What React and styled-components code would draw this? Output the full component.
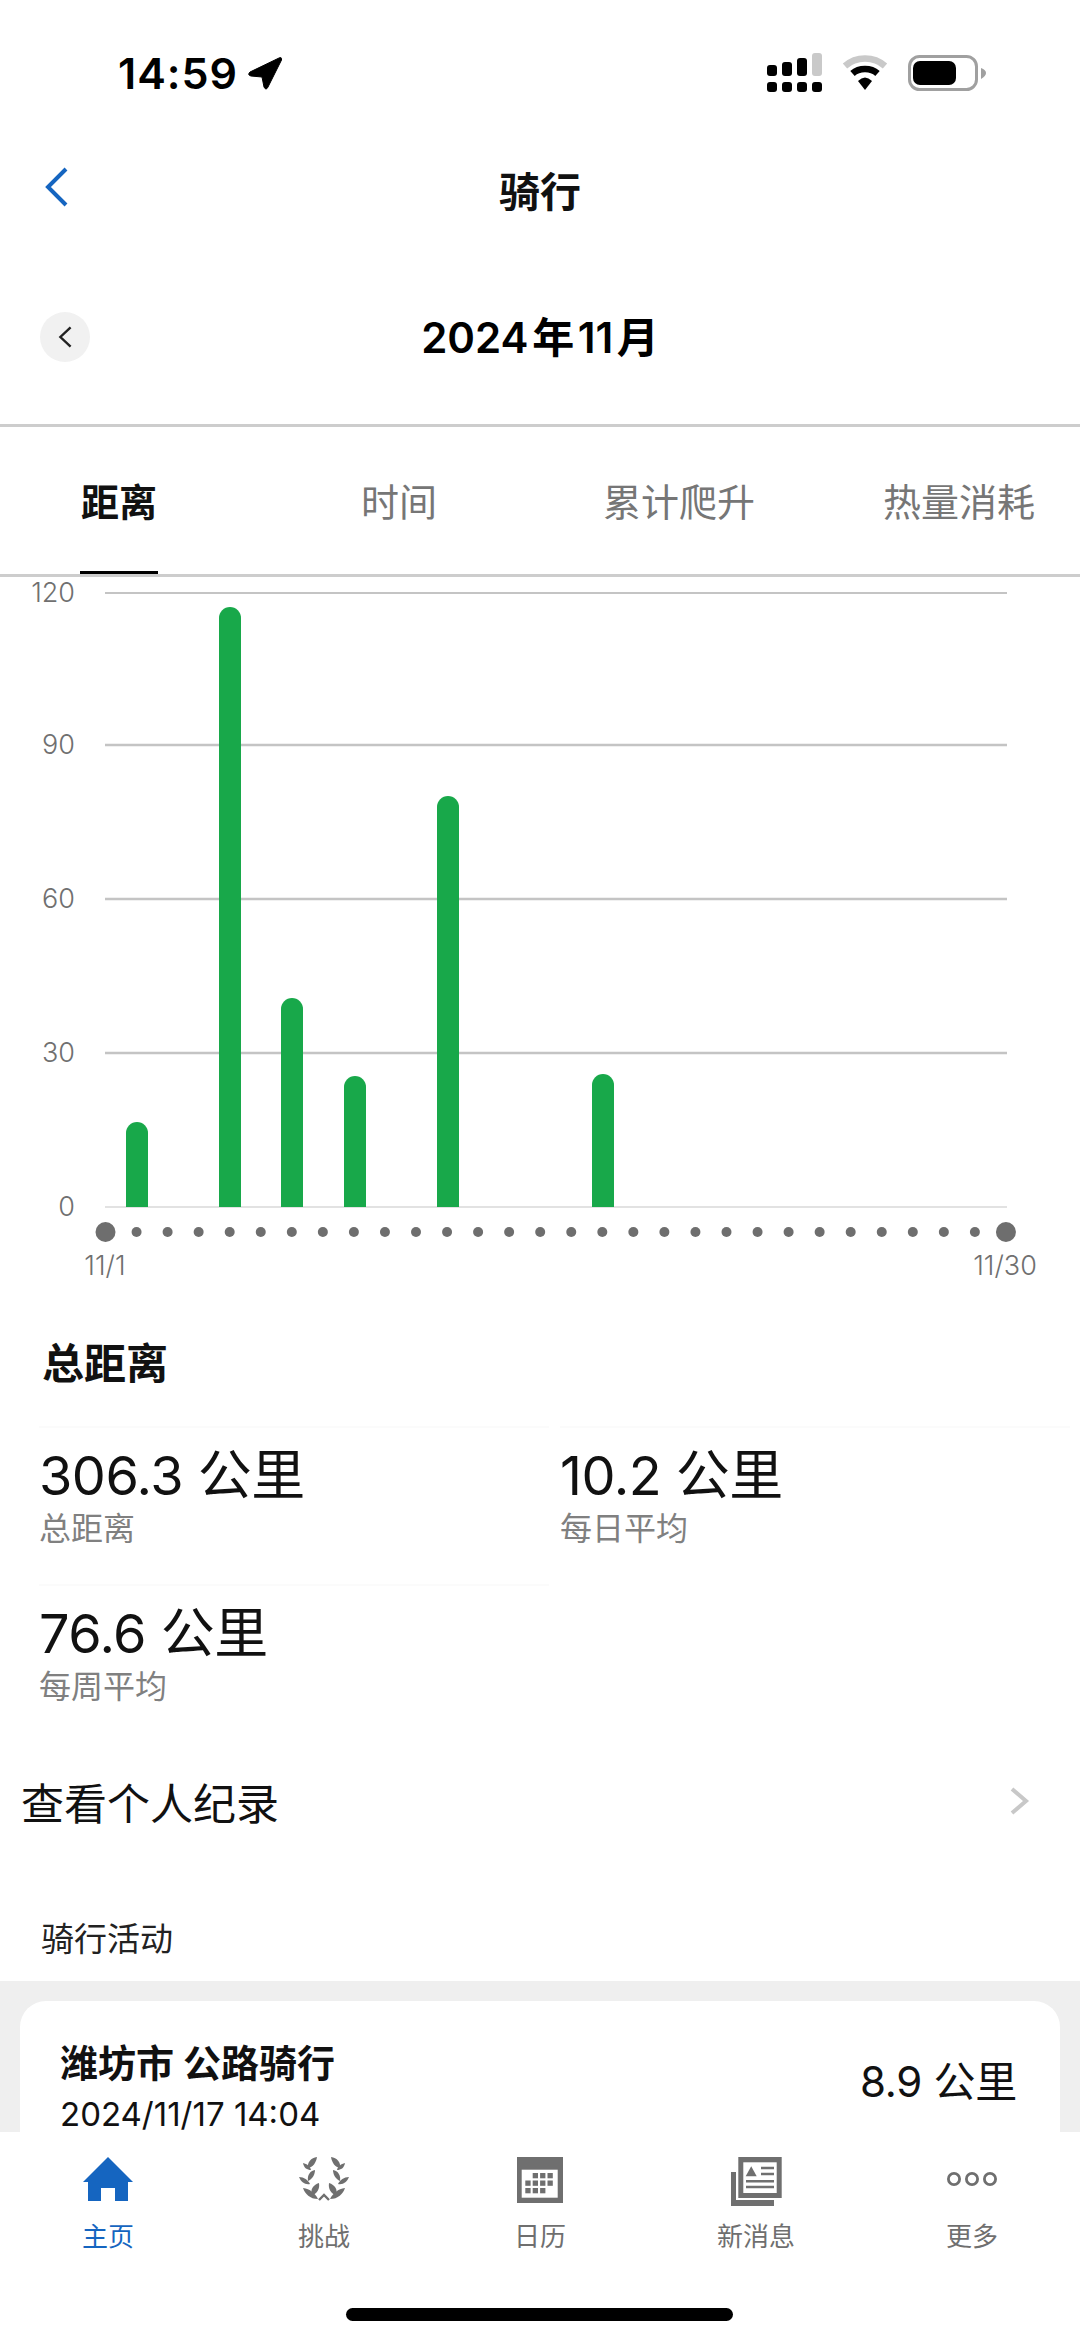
import React from "react";
import styled, { createGlobalStyle } from "styled-components";

const GlobalStyle = createGlobalStyle`
  html, body {
    margin: 0;
    padding: 0;
    background: #fff;
  }
  * {
    box-sizing: border-box;
  }
`;

const FONT = `Inter, "Noto Sans CJK SC", sans-serif`;

const Page = styled.div`
  width: 1080px;
  height: 2341px;
  display: flex;
  flex-direction: column;
  overflow: hidden;
  font-family: ${FONT};
  color: #111;
  background: #fff;
`;
const Scroll = styled.div`
  flex: 1;
  min-height: 0;
  overflow: hidden;
`;

const StatusBar = styled.div`
  height: 133px;
  padding: 13px 94px 0 118px;
  display: flex;
  align-items: center;
  justify-content: space-between;
`;
const TimeWrap = styled.div`
  display: flex;
  align-items: center;
  gap: 9px;
`;
const Time = styled.span`
  font-size: 43px;
  font-weight: 600;
  letter-spacing: 1px;
  color: #000;
`;
const StatusIcons = styled.div`
  display: flex;
  align-items: center;
  gap: 20px;
`;

const NavBar = styled.div`
  height: 114px;
  padding-bottom: 2px;
  position: relative;
  display: flex;
  align-items: center;
  justify-content: center;
`;
const NavTitle = styled.h1`
  margin: 0;
  font-size: 41px;
  font-weight: 700;
  color: #111;
`;
const BackButton = styled.div`
  position: absolute;
  left: 44px;
  top: 32px;
  display: flex;
`;

const MonthRow = styled.div`
  height: 180px;
  padding-bottom: 2px;
  position: relative;
  display: flex;
  align-items: center;
  justify-content: center;
  border-bottom: 3px solid #cdcdcd;
`;
const MonthTitle = styled.h2`
  margin: 0;
  font-size: 42px;
  font-weight: 600;
  word-spacing: -7px;
  color: #000;
`;
const PrevMonth = styled.div`
  position: absolute;
  left: 40px;
  top: 65px;
  width: 50px;
  height: 50px;
  border-radius: 50%;
  background: #f1f1f1;
  display: flex;
  align-items: center;
  justify-content: center;
`;

const Tabs = styled.div`
  height: 150px;
  margin-left: -21px;
  display: flex;
`;
const TabBox = styled.div`
  width: 280px;
  flex: none;
  height: 147px;
  display: flex;
  align-items: flex-start;
  justify-content: center;
`;
const TabText = styled.div`
  height: 147px;
  padding: 0 1px;
  display: flex;
  align-items: center;
  font-size: 38px;
  font-weight: ${(p) => (p.$active ? 700 : 400)};
  color: ${(p) => (p.$active ? "#111" : "#767676")};
  border-bottom: 3px solid ${(p) => (p.$active ? "#000" : "transparent")};
`;
const TabsLine = styled.div`
  height: 3px;
  background: #cdcdcd;
  margin-top: -3px;
`;

const ChartSvg = styled.svg`
  display: block;
  width: 1080px;
  height: 723px;
  text {
    font-family: ${FONT};
    font-size: 27px;
    font-weight: 300;
    fill: #707070;
  }
`;

const SectionTitle = styled.h3`
  margin: 0;
  height: 126px;
  padding: 0 0 6px 42px;
  display: flex;
  align-items: center;
  font-size: 42px;
  font-weight: 700;
  color: #111;
`;

const StatGrid = styled.div`
  display: grid;
  grid-template-columns: 510px 510px;
  column-gap: 11px;
  padding-left: 39px;
`;
const Stat = styled.div`
  height: 158px;
  padding-top: 12px;
  border-top: 2px solid #fbfbfb;
`;
const StatValue = styled.div`
  font-size: 54px;
  line-height: 72px;
  letter-spacing: -0.5px;
  font-weight: 400;
  color: #111;
`;
const StatLabel = styled.div`
  font-size: 32px;
  line-height: 44px;
  margin-top: -5px;
  color: #808080;
`;

const RecordRow = styled.div`
  height: 120px;
  padding: 0 50px 2px 21px;
  display: flex;
  align-items: center;
  justify-content: space-between;
  font-size: 43px;
  color: #111;
`;

const ActivityTitle = styled.div`
  height: 119px;
  padding: 30px 0 0 41px;
  display: flex;
  align-items: center;
  font-size: 33px;
  color: #222;
`;

const ActivityPanel = styled.div`
  background: #efefef;
  padding: 20px 20px 0;
`;
const ActivityCard = styled.div`
  height: 200px;
  background: #fff;
  border-radius: 26px 26px 0 0;
  padding: 36px 43px 0 40px;
  display: flex;
  justify-content: space-between;
`;
const CardName = styled.div`
  font-size: 38px;
  line-height: 52px;
  font-weight: 700;
  color: #111;
`;
const CardDate = styled.div`
  font-size: 33px;
  line-height: 44px;
  margin-top: 3px;
  color: #111;
`;
const CardDistance = styled.div`
  font-size: 42px;
  line-height: 60px;
  margin-top: 15px;
  letter-spacing: -0.3px;
  color: #111;
`;

const BottomBar = styled.div`
  height: 209px;
  flex: none;
  position: relative;
  background: #fff;
  display: grid;
  grid-template-columns: repeat(5, 216px);
`;
const BottomItem = styled.div`
  display: flex;
  flex-direction: column;
  align-items: center;
  padding-top: 25px;
  font-size: 26px;
  color: ${(p) => (p.$active ? "#1565c0" : "#6f6f6f")};
`;
const BottomIcon = styled.div`
  height: 56px;
  display: flex;
  align-items: flex-start;
  justify-content: center;
`;
const BottomLabel = styled.div`
  line-height: 34px;
  margin-top: 7px;
`;
const HomeIndicator = styled.div`
  position: absolute;
  left: 346px;
  bottom: 20px;
  width: 387px;
  height: 13px;
  border-radius: 7px;
  background: #000;
`;

const LocationArrow = () => (
  <svg width="36" height="35" viewBox="0 0 36 35">
    <path d="M32 2 L3 16 Q0 19 4 20 L15 21 L17 31 Q19 35 21 31 L34.5 4 Q35 0.5 32 2 Z" fill="#000" stroke="#000" strokeWidth="1" strokeLinejoin="round" />
  </svg>
);

const SignalIcon = () => {
  const cols = [
    { x: 0, top: 12, gray: false },
    { x: 15, top: 9, gray: false },
    { x: 30, top: 5, gray: false },
    { x: 45, top: 0, gray: true },
  ];
  return (
    <svg width="55" height="40" viewBox="0 0 55 40">
      {cols.map((c) => (
        <g key={c.x}>
          <rect x={c.x} y={c.top} width="10" height={23 - c.top} rx="3" fill={c.gray ? "#c9c9c9" : "#000"} />
          <rect x={c.x} y="29" width="10" height="10" rx="3" fill="#000" />
        </g>
      ))}
    </svg>
  );
};

const WifiIcon = () => (
  <svg width="46" height="36" viewBox="0 0 46 36">
    <path d="M3 11 C14 1 32 1 43 11" fill="none" stroke="#c9c9c9" strokeWidth="6.5" />
    <path d="M10.5 18.5 C17 12.5 29 12.5 35.5 18.5" fill="none" stroke="#000" strokeWidth="6.5" />
    <path d="M16 26 Q23 19 30 26 L23 35 Z" fill="#000" />
  </svg>
);

const BatteryIcon = () => (
  <svg width="78" height="36" viewBox="0 0 78 36">
    <rect x="1.5" y="1.5" width="67" height="33" rx="10" fill="none" stroke="#a0a0a0" strokeWidth="3" />
    <rect x="5" y="6" width="43" height="24" rx="7" fill="#000" />
    <path d="M73 13 Q78 15 78 18 Q78 21 73 24 Z" fill="#a0a0a0" />
  </svg>
);

const Chevron = ({ w, h, color, sw, left }) => (
  <svg width={w} height={h} viewBox={`0 0 ${w} ${h}`}>
    {left ? (
      <path d={`M${w - sw} ${sw} L${sw} ${h / 2} L${w - sw} ${h - sw}`} fill="none" stroke={color} strokeWidth={sw} />
    ) : (
      <path d={`M${sw} ${sw} L${w - sw} ${h / 2} L${sw} ${h - sw}`} fill="none" stroke={color} strokeWidth={sw} />
    )}
  </svg>
);

const HomeGlyph = () => (
  <svg width="50" height="44" viewBox="0 0 50 44">
    <path d="M25 0 L50 25 L45 25 L45 44 L32 44 L32 31 L18 31 L18 44 L5 44 L5 25 L0 25 Z" fill="#1565c0" />
  </svg>
);

// one side of the wreath, mirrored for the other side
const leaves = [
  "M18 0 C12 1 8 5 9 11 C14 10 17 6 18 0 Z",
  "M4 6 C5 11 8 13 12 13 C11 9 8 7 4 6 Z",
  "M16 13 C11 14 8 18 9 24 C13 22 16 18 16 13 Z",
  "M0 20 C2 25 6 28 11 27 C9 23 5 20 0 20 Z",
  "M20 26 C14 28 11 32 13 39 C18 36 21 32 20 26 Z",
  "M4 31 C6 37 11 42 19 42 C16 36 11 32 4 31 Z",
];

const WreathGlyph = () => (
  <svg width="50" height="44" viewBox="0 0 50 44">
    <g fill="#6f6f6f">
      {leaves.map((d) => (
        <path key={d} d={d} />
      ))}
      <g transform="translate(50 0) scale(-1 1)">
        {leaves.map((d) => (
          <path key={d} d={d} />
        ))}
      </g>
    </g>
    <path d="M20 43 L25 38 L30 43" fill="none" stroke="#6f6f6f" strokeWidth="2.4" />
  </svg>
);

const CalendarGlyph = () => {
  const cells = [];
  [0, 1, 2].forEach((r) =>
    [0, 1, 2, 3].forEach((c) => {
      if (r === 0 && c === 0) return;
      if (r === 2 && c === 3) return;
      cells.push(<rect key={`${r}-${c}`} x={8.3 + c * 7.4} y={16 + r * 7.5} width="5.3" height="5.3" fill="#6f6f6f" />);
    })
  );
  return (
    <svg width="46" height="46" viewBox="0 0 46 46">
      <rect width="46" height="46" fill="#6f6f6f" />
      <rect x="4.7" y="12.7" width="36" height="28" fill="#fff" />
      {cells}
    </svg>
  );
};

const NewsGlyph = () => (
  <svg width="51" height="50" viewBox="0 0 51 50">
    <path d="M0 15 H5 V43 H43 V49 H0 Z" fill="#6f6f6f" />
    <rect x="7.3" y="0" width="43.4" height="41" fill="#6f6f6f" />
    <rect x="12.3" y="5.3" width="33.4" height="30.7" fill="#fff" />
    <path d="M20.2 9.3 L25.7 19.3 L14.7 19.3 Z" fill="#6f6f6f" />
    <path d="M30 11 H43 M30 17 H43 M15 24.3 H43 M15 30 H43" stroke="#6f6f6f" strokeWidth="2.4" />
  </svg>
);

const MoreGlyph = () => (
  <svg width="50" height="46" viewBox="0 0 50 46">
    {[7, 25, 43].map((cx) => (
      <circle key={cx} cx={cx} cy="22" r="5.6" fill="none" stroke="#6f6f6f" strokeWidth="2.8" />
    ))}
  </svg>
);

const chartTop = 577;
const gridLines = [
  { label: "120", y: 593, w: 2 },
  { label: "90", y: 745, w: 2.6 },
  { label: "60", y: 899, w: 2.6 },
  { label: "30", y: 1053, w: 2.6 },
  { label: "0", y: 1207, w: 2 },
];
const bars = [
  { x: 126, top: 1122 },
  { x: 219, top: 607 },
  { x: 281, top: 998 },
  { x: 344, top: 1076 },
  { x: 437, top: 796 },
  { x: 592, top: 1074 },
];

const Chart = () => (
  <ChartSvg viewBox={`0 ${chartTop} 1080 723`}>
    {gridLines.map((g) => (
      <g key={g.label}>
        <line x1="105" x2="1007" y1={g.y} y2={g.y} stroke={g.label === "0" ? "#e2e2e2" : "#c4c4c4"} strokeWidth={g.w} />
        <text x="75" y={g.y + 9} textAnchor="end">
          {g.label}
        </text>
      </g>
    ))}
    {bars.map((b) => (
      <path
        key={b.x}
        d={`M${b.x} 1207 V${b.top + 11} A11 11 0 0 1 ${b.x + 22} ${b.top + 11} V1207 Z`}
        fill="#18a84a"
      />
    ))}
    {Array.from({ length: 30 }).map((_, i) => (
      <circle key={i} cx={105.5 + i * 31.05} cy="1232" r={i === 0 || i === 29 ? 10 : 5} fill="#6e6e6e" />
    ))}
    <text x="105" y="1275" textAnchor="middle">
      11/1
    </text>
    <text x="1005" y="1275" textAnchor="middle">
      11/30
    </text>
  </ChartSvg>
);

const stats = [
  { value: "306.3 公里", label: "总距离" },
  { value: "10.2 公里", label: "每日平均" },
  { value: "76.6 公里", label: "每周平均" },
];

const bottomItems = [
  { label: "主页", icon: <HomeGlyph />, active: true },
  { label: "挑战", icon: <WreathGlyph /> },
  { label: "日历", icon: <CalendarGlyph /> },
  { label: "新消息", icon: <NewsGlyph /> },
  { label: "更多", icon: <MoreGlyph /> },
];

export default function App() {
  return (
    <Page>
      <GlobalStyle />
      <Scroll>
        <StatusBar>
          <TimeWrap>
            <Time>14:59</Time>
            <LocationArrow />
          </TimeWrap>
          <StatusIcons>
            <SignalIcon />
            <WifiIcon />
            <BatteryIcon />
          </StatusIcons>
        </StatusBar>
        <NavBar>
          <BackButton>
            <Chevron w={26} h={44} color="#1565c0" sw={4} left />
          </BackButton>
          <NavTitle>骑行</NavTitle>
        </NavBar>
        <MonthRow>
          <PrevMonth>
            <Chevron w={15} h={24} color="#222" sw={2.4} left />
          </PrevMonth>
          <MonthTitle>2024 年 11 月</MonthTitle>
        </MonthRow>
        <Tabs>
          <TabBox>
            <TabText $active>距离</TabText>
          </TabBox>
          <TabBox>
            <TabText>时间</TabText>
          </TabBox>
          <TabBox>
            <TabText>累计爬升</TabText>
          </TabBox>
          <TabBox>
            <TabText>热量消耗</TabText>
          </TabBox>
        </Tabs>
        <TabsLine />
        <Chart />
        <SectionTitle>总距离</SectionTitle>
        <StatGrid>
          {stats.map((s) => (
            <Stat key={s.label}>
              <StatValue>{s.value}</StatValue>
              <StatLabel>{s.label}</StatLabel>
            </Stat>
          ))}
        </StatGrid>
        <RecordRow>
          查看个人纪录
          <Chevron w={22} h={32} color="#c8c8c8" sw={4} />
        </RecordRow>
        <ActivityTitle>骑行活动</ActivityTitle>
        <ActivityPanel>
          <ActivityCard>
            <div>
              <CardName>潍坊市 公路骑行</CardName>
              <CardDate>2024/11/17 14:04</CardDate>
            </div>
            <CardDistance>8.9 公里</CardDistance>
          </ActivityCard>
        </ActivityPanel>
      </Scroll>
      <BottomBar>
        {bottomItems.map((item) => (
          <BottomItem key={item.label} $active={item.active}>
            <BottomIcon>{item.icon}</BottomIcon>
            <BottomLabel>{item.label}</BottomLabel>
          </BottomItem>
        ))}
        <HomeIndicator />
      </BottomBar>
    </Page>
  );
}
